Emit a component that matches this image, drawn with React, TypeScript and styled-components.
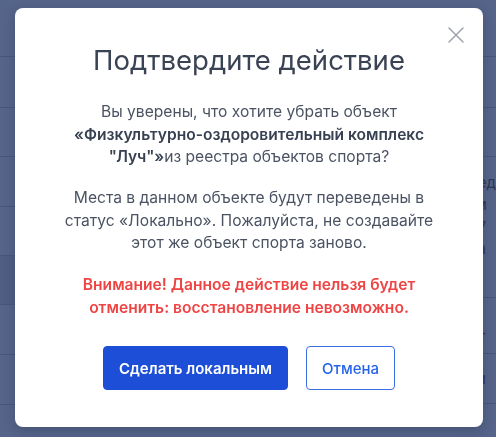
import React from 'react';
import styled, { createGlobalStyle } from 'styled-components';

const GlobalStyle = createGlobalStyle`
  html, body {
    margin: 0;
    padding: 0;
    height: 100%;
    overflow: hidden;
    background: #556489;
    font-family: Inter, "Noto Sans", sans-serif;
  }
  * {
    box-sizing: border-box;
  }
`;

const Page = styled.div`
  display: flex;
  width: 100%;
  height: 437px;
`;

const Side = styled.div`
  display: flex;
  flex-direction: column;
  width: 240px;
`;

const SideRow = styled.div<{ h: number; dark?: boolean }>`
  height: ${({ h }) => h}px;
  flex-shrink: 0;
  border-bottom: 1px solid #485779;
  background: ${({ dark }) => (dark ? '#4f5e83' : 'transparent')};
`;

const Table = styled.div`
  display: flex;
  flex-direction: column;
  flex: 1;
  padding-left: 230px;
`;

const Cell = styled.div<{ h: number }>`
  display: flex;
  flex-direction: column;
  justify-content: center;
  height: ${({ h }) => h}px;
  flex-shrink: 0;
  border-bottom: 1px solid #485779;
  color: #2b3858;
  font-size: 15px;
  line-height: 22px;
  white-space: nowrap;
`;

const Overlay = styled.div`
  position: fixed;
  inset: 0;
  display: flex;
  align-items: flex-start;
  justify-content: center;
  padding: 8px 0 0 2px;
`;

const Modal = styled.div`
  position: relative;
  display: flex;
  flex-direction: column;
  align-items: center;
  width: 468px;
  padding: 35px 40px 37px;
  background: #fff;
  border-radius: 8px;
  box-shadow: 0 4px 12px rgba(20, 30, 60, 0.25);
  text-align: center;
`;

const Close = styled.button`
  position: absolute;
  top: 19px;
  right: 19px;
  width: 16px;
  height: 16px;
  padding: 0;
  border: 0;
  background: none;
  color: #9ea3ab;
  cursor: pointer;
  display: flex;
`;

const Title = styled.h2`
  margin: 0 0 24px;
  font-size: 27.5px;
  line-height: 34px;
  font-weight: 400;
  color: #3a4354;
`;

const Text = styled.p`
  margin: 0 0 18.5px;
  font-size: 15.6px;
  line-height: 22.5px;
  color: #4b5363;
`;

const Strong = styled.b`
  font-weight: 600;
  color: #374151;
`;

const Warning = styled.p`
  margin: 0 0 27px;
  font-size: 15.6px;
  line-height: 23px;
  font-weight: 600;
  color: #ef4444;
`;

const Actions = styled.div`
  display: flex;
  gap: 18px;
`;

const Button = styled.button<{ primary?: boolean }>`
  height: 44px;
  padding: 0 15px;
  border-radius: 4px;
  font-family: Inter, "Noto Sans", sans-serif;
  font-size: 15px;
  font-weight: ${({ primary }) => (primary ? 600 : 500)};
  border: 1px solid ${({ primary }) => (primary ? '#1d4ed8' : '#3b6fe4')};
  background: ${({ primary }) => (primary ? '#1d4ed8' : '#fff')};
  color: ${({ primary }) => (primary ? '#fff' : '#2563eb')};
  cursor: pointer;
`;

const CloseIcon = () => (
  <svg width="16" height="16" viewBox="0 0 16 16" fill="none">
    <path d="M1 1l14 14M15 1L1 15" stroke="currentColor" strokeWidth="1.5" strokeLinecap="round" />
  </svg>
);

const sideRows = [57, 51, 49, 50, 49, 49, 50, 50];
const tableRows: { h: number; lines: string[] }[] = [
  { h: 57, lines: [] },
  { h: 51, lines: [] },
  { h: 49, lines: [] },
  { h: 141, lines: ['Сред', 'Том', 'т. (7', 'Сна', ''] },
  { h: 56, lines: ['', 'Дат'] },
  { h: 50, lines: ['Аци'] },
];

export default function App() {
  return (
    <>
      <GlobalStyle />
      <Page>
        <Side>
          {sideRows.map((h, i) => (
            <SideRow key={i} h={h} dark={i === 5} />
          ))}
        </Side>
        <Table>
          {tableRows.map((r, i) => (
            <Cell key={i} h={r.h}>
              {r.lines.map((l, j) => (
                <div key={j}>{l || '\u00a0'}</div>
              ))}
            </Cell>
          ))}
        </Table>
      </Page>
      <Overlay>
        <Modal>
          <Close aria-label="Закрыть">
            <CloseIcon />
          </Close>
          <Title>Подтвердите действие</Title>
          <Text>
            Вы уверены, что хотите убрать объект{' '}
            <Strong>«Физкультурно-оздоровительный комплекс "Луч"»</Strong>из реестра объектов спорта?
          </Text>
          <Text>
            Места в данном объекте будут переведены в статус «Локально». Пожалуйста, не создавайте
            этот же объект спорта заново.
          </Text>
          <Warning>Внимание! Данное действие нельзя будет отменить: восстановление невозможно.</Warning>
          <Actions>
            <Button primary>Сделать локальным</Button>
            <Button>Отмена</Button>
          </Actions>
        </Modal>
      </Overlay>
    </>
  );
}
